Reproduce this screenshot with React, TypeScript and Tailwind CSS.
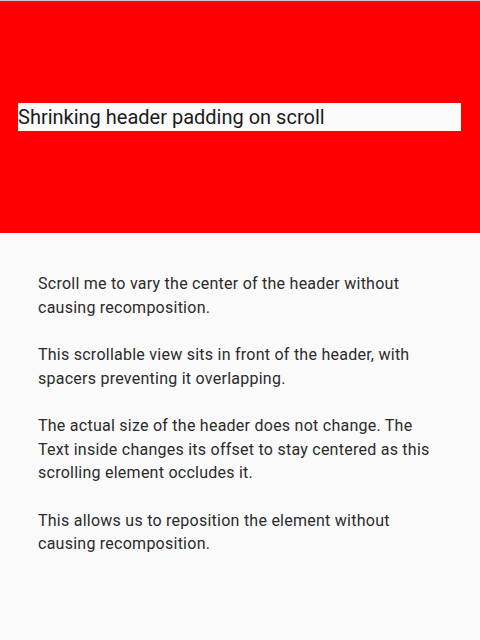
export default function App() {
    const paragraphs = [
        'Scroll me to vary the center of the header without causing recomposition.',
        'This scrollable view sits in front of the header, with spacers preventing it overlapping.',
        'The actual size of the header does not change. The Text inside changes its offset to stay centered as this scrolling element occludes it.',
        'This allows us to reposition the element without causing recomposition.',
    ]

    return (
        <div className="w-[480px] h-[640px] bg-[#fafafa] overflow-hidden" style={{ fontFamily: 'Roboto, "Noto Sans", sans-serif' }}>
            {/* Header */}
            <div className="h-[233px] bg-[#ff0000] border-t border-[#c8c8c8] flex items-center pl-[18px] pr-[19px]">
                <div className="w-full h-[28px] bg-[#fbfbfb] flex items-center">
                    <span className="text-[20px] leading-[28px] text-[#1c1c1c]">Shrinking header padding on scroll</span>
                </div>
            </div>

            {/* Scrollable content */}
            <div className="pt-[39px] pl-[38px] pr-[40px] flex flex-col gap-[24px]">
                {paragraphs.map((p, i) => (
                    <p key={i} className="text-[16px] leading-[23.5px] tracking-[0.25px] text-[#2b2b2b]">
                        {p}
                    </p>
                ))}
            </div>
        </div>
    )
}
